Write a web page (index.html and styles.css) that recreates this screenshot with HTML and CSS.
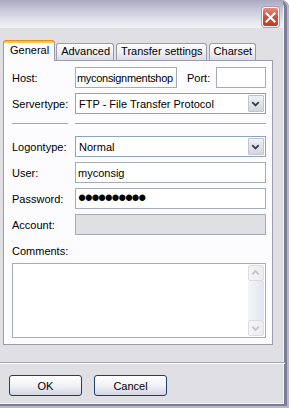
FILE: index.html
```html
<!DOCTYPE html>
<html lang="en">
<head>
    <meta charset="UTF-8">
    <title>Site settings</title>
    <link rel="stylesheet" href="styles.css">
</head>
<body>
<div class="window">
    <div class="titlebar">
        <button class="close-btn" type="button" aria-label="Close">
            <svg width="11" height="11" viewBox="0 0 11 11"><path d="M1.5 1.5 L9.5 9.5 M9.5 1.5 L1.5 9.5" stroke="#fff" stroke-width="2" stroke-linecap="square"/></svg>
        </button>
    </div>

    <div class="tabs">
        <div class="tab active">General</div>
        <div class="tab">Advanced</div>
        <div class="tab">Transfer settings</div>
        <div class="tab">Charset</div>
    </div>

    <div class="panel">
        <div class="form">
            <label for="host">Host:</label>
            <div class="host-line">
                <input type="text" id="host" class="field host" value="myconsignmentshop">
                <label for="port" class="port-label">Port:</label>
                <input type="text" id="port" class="field port">
            </div>

            <label>Servertype:</label>
            <div class="combo">
                <span class="combo-value">FTP - File Transfer Protocol</span>
                <span class="combo-btn"><svg width="16" height="18" viewBox="0 0 16 18"><path d="M4.5 7 L8 10.5 L11.5 7" fill="none" stroke="#3c3c50" stroke-width="2"/></svg></span>
            </div>

            <div class="sep"><span></span><span></span></div>

            <label>Logontype:</label>
            <div class="combo">
                <span class="combo-value">Normal</span>
                <span class="combo-btn"><svg width="16" height="18" viewBox="0 0 16 18"><path d="M4.5 7 L8 10.5 L11.5 7" fill="none" stroke="#3c3c50" stroke-width="2"/></svg></span>
            </div>

            <label for="user">User:</label>
            <input type="text" id="user" class="field" value="myconsig">

            <label for="pass">Password:</label>
            <input type="password" id="pass" class="field password" value="xxxxxxxxxx">

            <label for="account">Account:</label>
            <input type="text" id="account" class="field" disabled>
        </div>

        <label class="comments-label" for="comments">Comments:</label>
        <div class="memo">
            <textarea id="comments"></textarea>
            <div class="vscroll">
                <span class="sb-btn"><svg width="16" height="16" viewBox="0 0 16 16"><path d="M4.5 9.5 L8 6 L11.5 9.5" fill="none" stroke="#c4c4cc" stroke-width="2"/></svg></span>
                <span class="sb-track"></span>
                <span class="sb-btn"><svg width="16" height="16" viewBox="0 0 16 16"><path d="M4.5 6.5 L8 10 L11.5 6.5" fill="none" stroke="#c4c4cc" stroke-width="2"/></svg></span>
            </div>
        </div>
    </div>

    <div class="hr"></div>

    <div class="buttons">
        <button type="button" class="btn">OK</button>
        <button type="button" class="btn">Cancel</button>
    </div>
</div>
</body>
</html>
```

FILE: styles.css
```css
* {
    box-sizing: border-box;
}
body {
    margin: 0;
    background: #fff;
    font-family: "Liberation Sans", Arial, sans-serif;
    font-size: 11px;
    color: #000;
}
.window {
    width: 289px;
    height: 408px;
    display: flex;
    flex-direction: column;
    background: #e0dfe3;
    border-top-right-radius: 8px;
    overflow: hidden;
    box-shadow:
        inset -2px 0 0 #b8b8c8,
        inset 0 -2px 0 #b8b8c8,
        inset -5px 0 0 #7d7d98,
        inset 0 -4px 0 #7d7d98,
        inset -6px 0 0 #f4f4f8,
        inset 0 -5px 0 #f4f4f8;
}

/* title bar */
.titlebar {
    height: 28px;
    margin-right: 6px;
    display: flex;
    justify-content: flex-end;
    align-items: flex-start;
    padding: 7px 4px 0 0;
    background: linear-gradient(#a9a9c1, #c8c8d8 35%, #e8e8f0 80%, #f2f2f6);
}
.close-btn {
    width: 17px;
    height: 20px;
    padding: 0;
    display: flex;
    align-items: center;
    justify-content: center;
    border: 1px solid #fff;
    border-radius: 3px;
    background: linear-gradient(#e68b80, #d0503e 50%, #c03c2a);
    box-shadow: 0 0 0 1px #b0a0a8;
}

/* tabs */
.tabs {
    display: flex;
    align-items: flex-end;
    height: 20px;
    margin: 12px 0 0 3px;
}
.tab {
    height: 17px;
    line-height: 15px;
    padding: 0 3px 0 4px;
    margin-left: 2px;
    border: 1px solid #9b9bab;
    border-bottom: none;
    border-radius: 3px 3px 0 0;
    background: linear-gradient(#fefefe, #f0f0f5 50%, #dcdce6);
    white-space: nowrap;
}
.tab.active {
    position: relative;
    z-index: 1;
    height: 21px;
    line-height: 18px;
    padding: 0 5px 0 6px;
    margin: 0 -1px -1px 0;
    border-color: #9b9bab;
    border-top: 1px solid #e68b2c;
    background: linear-gradient(#ffc73c 0, #ffc73c 2px, #fcfcfe 2px);
}

/* panel */
.panel {
    width: 270px;
    margin-left: 3px;
    padding: 6px 6px 6px 8px;
    border: 1px solid #9b9bab;
    background: #fcfcfe;
}
.form {
    display: grid;
    grid-template-columns: 63px 191px;
    row-gap: 5px;
    align-items: center;
}
.field {
    height: 21px;
    margin: 0;
    padding: 0 2px;
    border: 1px solid #a5acb5;
    background: #fff;
    font: inherit;
    color: #000;
    outline: none;
}
.field:disabled {
    background: #e0dfe3;
}
.host-line {
    display: flex;
    align-items: center;
}
.host {
    width: 102px;
    padding: 0 1px;
    letter-spacing: -0.3px;
}
.port-label {
    margin-left: 10px;
}
.port {
    width: 50px;
    margin-left: auto;
}
.password {
    font-size: 23px;
    letter-spacing: -1.35px;
    padding-left: 2px;
}
.combo {
    height: 21px;
    display: flex;
    align-items: center;
    border: 1px solid #8ea2bd;
    background: #fff;
}
.combo-value {
    flex: 1;
    padding-left: 3px;
    white-space: nowrap;
    overflow: hidden;
}
.combo-btn {
    width: 16px;
    height: 17px;
    margin-right: 1px;
    display: flex;
    border: 1px solid #c2c2d2;
    border-radius: 1px;
    background: linear-gradient(#f0f0f6, #d6d6e2);
}
.combo-btn svg {
    margin: -1px 0 0 -1px;
}
.sep {
    grid-column: 1 / -1;
    display: grid;
    grid-template-columns: 56px 1fr;
    column-gap: 7px;
    padding: 4px 0 7px;
}
.sep span {
    height: 1px;
    background: #a6a6ae;
}

.comments-label {
    display: block;
    line-height: 13px;
    margin-top: 10px;
}
.memo {
    display: flex;
    width: 254px;
    height: 75px;
    margin-top: 5px;
    padding: 1px;
    border: 1px solid #a5acb5;
    background: #fff;
}
.memo textarea {
    flex: 1;
    border: none;
    resize: none;
    outline: none;
    font: inherit;
}
.vscroll {
    width: 16px;
    display: flex;
    flex-direction: column;
}
.sb-btn {
    height: 16px;
    display: flex;
    border: 1px solid #dcdce4;
    border-radius: 2px;
    background: linear-gradient(90deg, #f6f6f8, #ececf0);
}
.sb-btn svg {
    margin: -1px 0 0 -1px;
}
.sb-track {
    flex: 1;
    background: linear-gradient(90deg, #f4f4fa, #e4e4f0);
}

/* bottom */
.hr {
    height: 2px;
    margin: 17px 4px 0 0;
    border-top: 1px solid #a6a6ae;
    border-bottom: 1px solid #fff;
}
.buttons {
    display: flex;
    gap: 12px;
    margin: 11px 0 0 9px;
}
.btn {
    width: 73px;
    height: 21px;
    padding: 0;
    border: 1px solid #1c3f6e;
    border-radius: 3px;
    background: linear-gradient(#ffffff, #f2f2f6 50%, #d4d4e2);
    font: inherit;
    color: #000;
}
```
